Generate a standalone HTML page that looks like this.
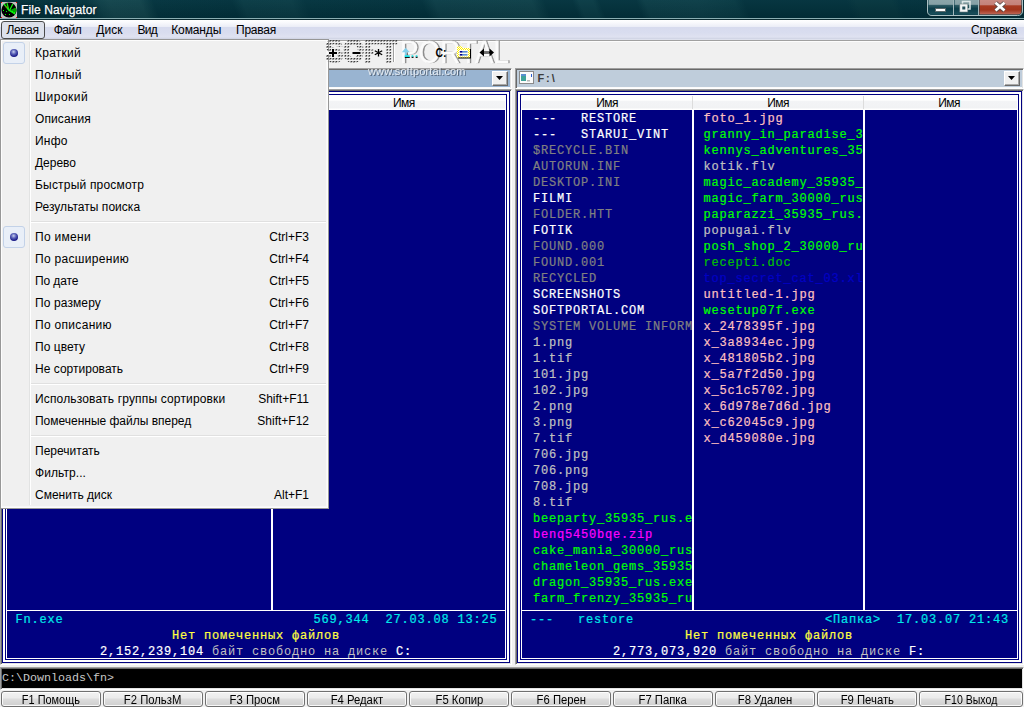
<!DOCTYPE html><html lang="ru"><head><meta charset="utf-8"><title>File Navigator</title><style>
*{box-sizing:border-box;margin:0;padding:0}
html,body{width:1024px;height:707px;overflow:hidden;background:#f0f0f0}
body{position:relative;font-family:"Liberation Sans",sans-serif;font-size:12px;color:#000}
.a{position:absolute}
.t{position:absolute;white-space:pre;line-height:16px;height:16px}
#title{left:0;top:0;width:1024px;height:18px;background:linear-gradient(68deg,#02303a 3px,#04343e 86px,#0e4049 98px,#13454d 107px,#12444c 136px,#03343f 148px,#02323d 221px,#093b45 231px,#0a3c46 276px,#03343f 289px,#02323d 397px,#0c3e48 409px,#0e4049 499px,#03333e 511px,#03333e 537px,#0a3c46 543px,#0a3c46 556px,#03333e 562px,#03333e 596px,#0b3d47 604px,#0c3e48 652px,#083a44 687px,#02323d 696px,#02323d 791px,#06363f 800px,#06363f 833px,#02323d 840px,#03313b 952px)}
#title .shade{left:0;top:0;width:1024px;height:18px;background:linear-gradient(180deg,rgba(255,255,255,.02),rgba(0,0,0,.12))}
#tl1{left:0;top:18px;width:1024px;height:1px;background:#8aaeb2}
#tl2{left:0;top:19px;width:1024px;height:1px;background:#0a2a30}
#ttext{left:21px;top:2px;color:#fff;font-size:12px;line-height:16px;letter-spacing:.12px;-webkit-text-stroke:.25px #fff;text-shadow:0 0 3px rgba(0,20,30,.9)}
#menubar{left:0;top:20px;width:1024px;height:20px;background:linear-gradient(180deg,#ffffff 0,#f7f8fc 3px,#eceef7 6.5px,#d7dbee 7.5px,#d9ddef 13px,#dfe2f1 17px,#d2d6e6 18.5px,#e4e6f0 20px)}
#mline{left:0;top:40px;width:1024px;height:1px;background:#a0a0a0}
.mi{position:absolute;top:22px;height:18px;line-height:17px;font-size:12px;white-space:pre;color:#000}
#mleft{left:1px;top:21px;width:44px;height:18px;border:1px solid #4a4a4a;border-radius:3px;background:linear-gradient(180deg,#dcdfe8,#dde2ee)}
.mono{font-family:"Liberation Mono",monospace;font-size:12px;letter-spacing:.8px;font-weight:normal;-webkit-text-stroke:0.2px currentColor}
.panel{position:absolute;top:89px;height:576px;background:#000080}
.hd{position:absolute;top:95px;height:15px;background:linear-gradient(180deg,#fff 0,#fff 5px,#f3f4f6 6.5px,#f1f2f4 13px,#fff 14px)}
.hdt{position:absolute;top:96px;font-size:12px;letter-spacing:-.55px;line-height:14px;color:#000;text-align:center;white-space:pre}
.w{position:absolute;background:#fff}
.fk{position:absolute;top:691px;height:16px;width:100px;border:1px solid #707070;border-radius:3px;background:linear-gradient(180deg,#f2f2f2 0,#ebebeb 6px,#dddddd 7px,#cfcfcf 14px);box-shadow:inset 0 0 0 1px rgba(255,255,255,.85);text-align:center;font-size:12px;line-height:16px;white-space:pre;overflow:hidden}
.fk span{display:inline-block;transform-origin:50% 50%}
#menu{left:0;top:39px;width:329px;height:470px;background:#f0f0f0;border:1px solid #979797}
#menu .in{left:0;top:0;width:327px;height:468px;border:1px solid #fdfdfd;box-shadow:inset -1px -1px 0 #f8f8f8}
.gut1{left:28px;top:2px;width:1px;height:463px;background:#e2e3e3}
.gut2{left:29px;top:2px;width:1px;height:463px;background:#fff}
.it{position:absolute;left:34px;font-size:12px;line-height:22px;height:22px;white-space:pre;color:#000}
.sc{position:absolute;right:19px;font-size:12px;line-height:22px;height:22px;white-space:pre;color:#000}
.sep{position:absolute;left:30px;width:295px;height:2px;border-top:1px solid #e0e0e0;border-bottom:1px solid #fff}
.chk{position:absolute;left:2px;width:22px;height:22px;border:1px solid #c3d2e8;border-radius:3px;background:#e9eff8}
.ball{position:absolute;left:6px;top:5.5px;width:8px;height:8px;border-radius:50%;background:radial-gradient(circle at 45% 35%,#c8d0ee 0,#5a62b8 35%,#1a1a88 70%,#141478 100%)}
</style></head><body>
<div id="title" class="a"><div class="a shade"></div></div><div id="tl1" class="a"></div><div id="tl2" class="a"></div>
<svg class="a" style="left:1px;top:2px" width="16" height="16" viewBox="0 0 16 16"><rect width="16" height="16" fill="#c0c0c0"/><circle cx="8" cy="8" r="7.6" fill="#000"/><path d="M8 8.500 L14.800 5.500 L15.600 9 L13.800 12.500 Z" fill="#00a000"/><path d="M8.500 9 L3 2 M7.500 7 L6 1.200 M8.500 8.500 L11.800 2 M8.500 8.500 L14 12" stroke="#10f010" stroke-width="1.300" fill="none"/><path d="M4.500 4.500h2v1h-2z" fill="#b04000"/><g fill="#00ff00"><rect x="2" y="8" width="1" height="1"/><rect x="5" y="9" width="1" height="1"/><rect x="4" y="12" width="1" height="1"/><rect x="8" y="12" width="1" height="1"/><rect x="11" y="9" width="1" height="1"/><rect x="13" y="10" width="1" height="1"/></g><g fill="#ff0000"><rect x="0" y="0" width="1" height="1"/><rect x="15" y="0" width="1" height="1"/><rect x="0" y="15" width="1" height="1"/><rect x="15" y="15" width="1" height="1"/></g></svg>
<div id="ttext" class="a">File Navigator</div>
<svg class="a" style="left:926px;top:0" width="98" height="18" viewBox="0 0 98 18"><defs><linearGradient id="gb" x1="0" y1="0" x2="0" y2="1"><stop offset="0" stop-color="#8aa5a9"/><stop offset=".30" stop-color="#86a1a6"/><stop offset=".36" stop-color="#2e5b64"/><stop offset=".6" stop-color="#0a3d49"/><stop offset="1" stop-color="#1a505c"/></linearGradient><linearGradient id="gr" x1="0" y1="0" x2="0" y2="1"><stop offset="0" stop-color="#c98a82"/><stop offset=".33" stop-color="#c4827a"/><stop offset=".40" stop-color="#a83a22"/><stop offset=".68" stop-color="#a2341c"/><stop offset="1" stop-color="#bf6a5a"/></linearGradient></defs><path d="M0.500 -1 V11.500 Q0.500 16.500 5.500 16.500 H92 Q97.500 16.500 97.500 11.500 V-1" fill="none" stroke="#062a32" stroke-width="1" opacity=".7"/><path d="M1.500 -1 V11 Q1.500 15.500 6 15.500 H91.500 Q96.500 15.500 96.500 11 V-1" fill="#0a3d49" stroke="#a9c0c3" stroke-width="1"/><path d="M2.500 0 H27 V14.500 H6 Q2.500 14.500 2.500 11 Z" fill="url(#gb)"/><path d="M28.500 0 H52 V14.500 H28.500 Z" fill="url(#gb)"/><path d="M53.500 0 H95.500 V11 Q95.500 14.500 91.500 14.500 H53.500 Z" fill="url(#gr)"/><path d="M27.500 0 V15 M52.500 0 V15" stroke="#c7d6d8" stroke-width="1" opacity=".8"/><rect x="9.500" y="8.500" width="10" height="3" fill="#fff" stroke="#5a6a6c" stroke-width="1"/><rect x="36.500" y="1.500" width="7.500" height="7.500" fill="none" stroke="#dfe8e8" stroke-width="1.500"/><rect x="33.800" y="4" width="8" height="8" fill="#f4f7f7" stroke="#6a7a7c" stroke-width=".6"/><rect x="36.300" y="6.500" width="3" height="3" fill="#244f5a"/><path d="M69.500 2.800 L78.500 10.500 M78.500 2.800 L69.500 10.500" stroke="#5b4a48" stroke-width="4.4" stroke-linecap="butt"/><path d="M69.500 2.800 L78.500 10.500 M78.500 2.800 L69.500 10.500" stroke="#fff" stroke-width="2.800" stroke-linecap="butt"/></svg>
<div id="menubar" class="a"></div><div id="mline" class="a"></div><div class="a" style="left:0;top:41px;width:1024px;height:1px;background:#fcfcfc"></div>
<div id="mleft" class="a"></div>
<div class="mi" style="left:6.50px;letter-spacing:-0.394px">Левая</div><div class="mi" style="left:53.75px;letter-spacing:-0.504px">Файл</div><div class="mi" style="left:96.25px;letter-spacing:0.039px">Диск</div><div class="mi" style="left:137.50px;letter-spacing:-0.740px">Вид</div><div class="mi" style="left:171.25px;letter-spacing:-0.121px">Команды</div><div class="mi" style="left:236.00px;letter-spacing:-0.232px">Правая</div><div class="mi" style="left:971.00px;letter-spacing:-0.154px">Справка</div>
<div class="a" style="left:393px;top:44px;width:1px;height:18px;background:#a0a0a0"></div><div class="a" style="left:394px;top:44px;width:1px;height:18px;background:#fff"></div>
<svg class="a" style="left:326px;top:40px;filter:grayscale(1)" width="186" height="42" viewBox="0 0 186 42" font-family='"Liberation Sans", sans-serif' font-size="30.500"><text x="75.300" y="23.400" fill="#707070" fill-opacity=".75" stroke="#707070" stroke-opacity=".5" stroke-width=".5" textLength="109" lengthAdjust="spacingAndGlyphs">PORTAL</text><text x="74" y="22.600" fill="#fbfbfb" fill-opacity="1" stroke="#fbfbfb" stroke-width=".3" textLength="109" lengthAdjust="spacingAndGlyphs">PORTAL</text></svg>
<svg class="a" style="left:326px;top:40px" width="186" height="42" viewBox="0 0 186 42" font-family='"Liberation Sans", sans-serif'><path d="M3 13 H11 M7 9 V17" stroke="#000" stroke-width="2"/><path d="M26.500 13 H34.500" stroke="#000" stroke-width="2"/><path d="M52.500 9 V16.500 M48.800 10.800 L56.200 14.800 M56.200 10.800 L48.800 14.800" stroke="#000" stroke-width="1.300"/><rect x="80.600" y="12.300" width="1" height="3.200" fill="#000" opacity=".85"/><rect x="78.800" y="16.800" width="5" height="1.100" fill="#000"/><path d="M79.700 7.700 L83.700 12.200 H80.600 V15.500 H83.500 V16.900 H78.800 V12.200 H75.800 Z" fill="#84d0ec"/><rect x="78.800" y="15.400" width="4.700" height="1.500" fill="#00e4e4"/><rect x="85.600" y="16.500" width="1.900" height="1.400" fill="#000"/><rect x="85.600" y="15.300" width="1.700" height="1.400" fill="#00e4e4"/><rect x="89.700" y="16.500" width="1.900" height="1.400" fill="#000"/><rect x="89.700" y="15.300" width="1.700" height="1.400" fill="#00e4e4"/><text x="109.500" y="17.200" font-size="12" font-weight="bold" fill="#000" textLength="11" lengthAdjust="spacingAndGlyphs">C:</text><defs><pattern id="chk" width="2" height="2" patternUnits="userSpaceOnUse"><rect width="2" height="2" fill="#fffff0"/><rect width="1" height="1" fill="#ffee00"/><rect x="1" y="1" width="1" height="1" fill="#ffee00"/></pattern></defs><path d="M132 9 H145 V18.500 H132 Z" fill="#000"/><path d="M131 6.300 H136 L137 8 H144 V17.500 H131 Z" fill="url(#chk)"/><rect x="133" y="10" width="9" height="6.500" fill="#fffdf0"/><rect x="136" y="11" width="5.500" height="1.600" fill="#5b8fd8"/><rect x="136" y="14" width="5.500" height="1.600" fill="#5b8fd8"/><rect x="133.800" y="11" width="2.400" height="1.600" fill="#000090"/><rect x="133.800" y="14" width="2.400" height="1.600" fill="#000090"/><path d="M153.500 12.500 L158 8.500 V11.500 H163.500 V8.500 L168 12.500 L163.500 16.500 V13.500 H158 V16.500 Z" fill="#000"/><rect x="158" y="11.600" width="5" height="1.800" fill="#707070"/></svg>
<div class="a" style="left:0px;top:68px;width:512px;height:21px;background:#99b4d1;border-top:1px solid #a0a0a0;border-left:1px solid #a0a0a0;border-right:1px solid #fff;border-bottom:1px solid #fff;box-shadow:inset 1px 1px 0 #696969,inset -1px 0 0 #e3e3e3,inset 0 -1px 0 #fafafa"></div>
<div class="a" style="left:492px;top:71px;width:16px;height:15px;background:#f0f0f0;border-top:1px solid #fff;border-left:1px solid #fff;border-right:1px solid #696969;border-bottom:1px solid #696969;box-shadow:inset -1px -1px 0 #a9a9a9"></div>
<svg class="a" style="left:496px;top:76px" width="8" height="5" viewBox="0 0 8 5"><path d="M0 0 H7 L3.500 4 Z" fill="#000"/></svg>
<div class="a" style="left:515px;top:68px;width:509px;height:21px;background:#bfcddb;border-top:1px solid #a0a0a0;border-left:1px solid #a0a0a0;border-right:1px solid #fff;border-bottom:1px solid #fff;box-shadow:inset 1px 1px 0 #696969,inset -1px 0 0 #e3e3e3,inset 0 -1px 0 #fafafa"></div>
<div class="a" style="left:1004px;top:71px;width:16px;height:15px;background:#f0f0f0;border-top:1px solid #fff;border-left:1px solid #fff;border-right:1px solid #696969;border-bottom:1px solid #696969;box-shadow:inset -1px -1px 0 #a9a9a9"></div>
<svg class="a" style="left:1008px;top:76px" width="8" height="5" viewBox="0 0 8 5"><path d="M0 0 H7 L3.500 4 Z" fill="#000"/></svg>
<svg class="a" style="left:519px;top:71px" width="15" height="13" viewBox="0 0 15 13"><rect x=".5" y=".5" width="14" height="12" fill="#fcfcfc" stroke="#8a8a8a"/><rect x="2" y="3" width="5" height="7" fill="#3fa39a"/><rect x="2" y="3" width="5" height="2" fill="#5a8fd0"/><rect x="8" y="9" width="3" height="1.500" fill="#b8b8b8"/><rect x="12" y="3" width="1" height="3" fill="#2a5fd0"/></svg>
<div class="a" style="left:537.5px;top:70px;font-size:11px;line-height:16px;font-weight:bold;color:#3c3c3c;white-space:pre;letter-spacing:1.9px">F:\</div>
<div class="a" style="left:23px;top:70px;font-size:11px;line-height:16px;font-weight:bold;color:#fff;white-space:pre">C:\</div>
<div class="a" style="left:368px;top:63px;width:99px;font-size:11px;letter-spacing:.12px;line-height:16px;color:#eef2f6;white-space:pre;text-shadow:1px 1px 0 rgba(60,72,90,.8);opacity:.92" id="wurl">www.softportal.com</div>
<div class="panel" style="left:0px;width:512px;border-top:1px solid #a0a0a0;border-left:1px solid #a0a0a0;border-right:1px solid #fff;border-bottom:1px solid #fff;box-shadow:inset 1px 1px 0 #696969,inset -1px -1px 0 #e3e3e3"></div>
<div class="a" style="left:3px;top:92px;width:506px;height:570px;border:2px solid #fff"></div>
<div class="a" style="left:6px;top:95px;width:500px;height:564px;border:1px solid #fff"></div>
<div class="hd" style="left:7px;width:498px"></div>
<div class="w" style="left:7px;top:610px;width:498px;height:1px"></div>
<div class="w" style="left:271px;top:110px;width:2px;height:500px"></div>
<div class="a" style="left:271px;top:96px;width:1px;height:13px;background:#dcdcdc"></div>
<div class="hdt" style="left:109px;width:60px">Имя</div>
<div class="hdt" style="left:373.8px;width:60px">Имя</div>
<div class="panel" style="left:515px;width:509px;border-top:1px solid #a0a0a0;border-left:1px solid #a0a0a0;border-right:1px solid #fff;border-bottom:1px solid #fff;box-shadow:inset 1px 1px 0 #696969,inset -1px -1px 0 #e3e3e3"></div>
<div class="a" style="left:518px;top:92px;width:503px;height:570px;border:2px solid #fff"></div>
<div class="a" style="left:521px;top:95px;width:497px;height:564px;border:1px solid #fff"></div>
<div class="hd" style="left:522px;width:495px"></div>
<div class="w" style="left:522px;top:610px;width:495px;height:1px"></div>
<div class="w" style="left:692px;top:110px;width:2px;height:500px"></div>
<div class="a" style="left:692px;top:96px;width:1px;height:13px;background:#dcdcdc"></div>
<div class="w" style="left:863px;top:110px;width:2px;height:500px"></div>
<div class="a" style="left:863px;top:96px;width:1px;height:13px;background:#dcdcdc"></div>
<div class="hdt" style="left:577px;width:60px">Имя</div>
<div class="hdt" style="left:748px;width:60px">Имя</div>
<div class="hdt" style="left:919px;width:60px">Имя</div>
<div class="a mono" style="left:522px;top:110px;width:170px;height:500px;overflow:hidden">
<div class="t" style="left:11px;top:1px;color:#ffffff">---   RESTORE</div>
<div class="t" style="left:11px;top:17px;color:#ffffff">---   STARUI_VINT</div>
<div class="t" style="left:11px;top:33px;color:#808080">$RECYCLE.BIN</div>
<div class="t" style="left:11px;top:49px;color:#808080">AUTORUN.INF</div>
<div class="t" style="left:11px;top:65px;color:#808080">DESKTOP.INI</div>
<div class="t" style="left:11px;top:81px;color:#ffffff">FILMI</div>
<div class="t" style="left:11px;top:97px;color:#808080">FOLDER.HTT</div>
<div class="t" style="left:11px;top:113px;color:#ffffff">FOTIK</div>
<div class="t" style="left:11px;top:129px;color:#808080">FOUND.000</div>
<div class="t" style="left:11px;top:145px;color:#808080">FOUND.001</div>
<div class="t" style="left:11px;top:161px;color:#808080">RECYCLED</div>
<div class="t" style="left:11px;top:177px;color:#ffffff">SCREENSHOTS</div>
<div class="t" style="left:11px;top:193px;color:#ffffff">SOFTPORTAL.COM</div>
<div class="t" style="left:11px;top:209px;color:#808080">SYSTEM VOLUME INFORMATION</div>
<div class="t" style="left:11px;top:225px;color:#c0c0c0">1.png</div>
<div class="t" style="left:11px;top:241px;color:#c0c0c0">1.tif</div>
<div class="t" style="left:11px;top:257px;color:#c0c0c0">101.jpg</div>
<div class="t" style="left:11px;top:273px;color:#c0c0c0">102.jpg</div>
<div class="t" style="left:11px;top:289px;color:#c0c0c0">2.png</div>
<div class="t" style="left:11px;top:305px;color:#c0c0c0">3.png</div>
<div class="t" style="left:11px;top:321px;color:#c0c0c0">7.tif</div>
<div class="t" style="left:11px;top:337px;color:#c0c0c0">706.jpg</div>
<div class="t" style="left:11px;top:353px;color:#c0c0c0">706.png</div>
<div class="t" style="left:11px;top:369px;color:#c0c0c0">708.jpg</div>
<div class="t" style="left:11px;top:385px;color:#c0c0c0">8.tif</div>
<div class="t" style="left:11px;top:401px;color:#00ff00">beeparty_35935_rus.exe</div>
<div class="t" style="left:11px;top:417px;color:#ff00ff">benq5450bqe.zip</div>
<div class="t" style="left:11px;top:433px;color:#00ff00">cake_mania_30000_rus.exe</div>
<div class="t" style="left:11px;top:449px;color:#00ff00">chameleon_gems_35935_rus.exe</div>
<div class="t" style="left:11px;top:465px;color:#00ff00">dragon_35935_rus.exe</div>
<div class="t" style="left:11px;top:481px;color:#00ff00">farm_frenzy_35935_rus.exe</div>
</div>
<div class="a mono" style="left:694px;top:110px;width:169px;height:500px;overflow:hidden">
<div class="t" style="left:9.5px;top:1px;color:#ffc0c0">foto_1.jpg</div>
<div class="t" style="left:9.5px;top:17px;color:#00ff00">granny_in_paradise_35935_rus.exe</div>
<div class="t" style="left:9.5px;top:33px;color:#00ff00">kennys_adventures_35935_rus.exe</div>
<div class="t" style="left:9.5px;top:49px;color:#c0c0c0">kotik.flv</div>
<div class="t" style="left:9.5px;top:65px;color:#00ff00">magic_academy_35935_rus.exe</div>
<div class="t" style="left:9.5px;top:81px;color:#00ff00">magic_farm_30000_rus.exe</div>
<div class="t" style="left:9.5px;top:97px;color:#00ff00">paparazzi_35935_rus.exe</div>
<div class="t" style="left:9.5px;top:113px;color:#c0c0c0">popugai.flv</div>
<div class="t" style="left:9.5px;top:129px;color:#00ff00">posh_shop_2_30000_rus.exe</div>
<div class="t" style="left:9.5px;top:145px;color:#00c000">recepti.doc</div>
<div class="t" style="left:9.5px;top:161px;color:#0000c4">top_secret_cat_03.xls</div>
<div class="t" style="left:9.5px;top:177px;color:#ffc0c0">untitled-1.jpg</div>
<div class="t" style="left:9.5px;top:193px;color:#00ff00">wesetup07f.exe</div>
<div class="t" style="left:9.5px;top:209px;color:#ffc0c0">x_2478395f.jpg</div>
<div class="t" style="left:9.5px;top:225px;color:#ffc0c0">x_3a8934ec.jpg</div>
<div class="t" style="left:9.5px;top:241px;color:#ffc0c0">x_481805b2.jpg</div>
<div class="t" style="left:9.5px;top:257px;color:#ffc0c0">x_5a7f2d50.jpg</div>
<div class="t" style="left:9.5px;top:273px;color:#ffc0c0">x_5c1c5702.jpg</div>
<div class="t" style="left:9.5px;top:289px;color:#ffc0c0">x_6d978e7d6d.jpg</div>
<div class="t" style="left:9.5px;top:305px;color:#ffc0c0">x_c62045c9.jpg</div>
<div class="t" style="left:9.5px;top:321px;color:#ffc0c0">x_d459080e.jpg</div>
</div>
<div class="a mono" style="left:7px;top:611px;width:498px;height:48px;overflow:hidden">
<div class="t" style="left:8.5px;top:1px;color:#00e8e8">Fn.exe</div>
<div class="t" style="left:306.5px;top:1px;color:#00e8e8">569,344  27.03.08 13:25</div>
<div class="t" style="left:165px;top:17px;color:#ffff40">Нет помеченных файлов</div>
<div class="t" style="left:93px;top:33px;color:#c0c0c0"><span style="color:#fff">2,152,239,104</span> <span style="-webkit-text-stroke:0">байт свободно на диске</span> <span style="color:#fff">C:</span></div>
</div>
<div class="a mono" style="left:522px;top:611px;width:495px;height:48px;overflow:hidden">
<div class="t" style="left:8px;top:1px;color:#00e8e8">---   restore</div>
<div class="t" style="left:303px;top:1px;color:#00e8e8">&lt;Папка&gt;  17.03.07 21:43</div>
<div class="t" style="left:163px;top:17px;color:#ffff40">Нет помеченных файлов</div>
<div class="t" style="left:91px;top:33px;color:#c0c0c0"><span style="color:#fff">2,773,073,920</span> <span style="-webkit-text-stroke:0">байт свободно на диске</span> <span style="color:#fff">F:</span></div>
</div>
<div class="a" style="left:0;top:667px;width:1024px;height:23px;background:#000;border-top:1px solid #a0a0a0;border-left:1px solid #a0a0a0;border-right:1px solid #fff;border-bottom:1px solid #fff;box-shadow:inset 1px 1px 0 #696969,inset -1px -1px 0 #e3e3e3"></div>
<div class="a" style="left:2px;top:670px;font-family:'Liberation Mono',monospace;font-size:11.67px;line-height:16px;color:#c8c8c8;white-space:pre" id="cmd">C:\Downloads\fn&gt;</div>
<div class="fk" style="left:1px"><span style="transform:scaleX(0.91)">F1 Помощь</span></div>
<div class="fk" style="left:103px"><span style="transform:scaleX(0.94)">F2 ПользМ</span></div>
<div class="fk" style="left:205px"><span style="transform:scaleX(0.94)">F3 Просм</span></div>
<div class="fk" style="left:307px"><span style="transform:scaleX(0.94)">F4 Редакт</span></div>
<div class="fk" style="left:409px"><span style="transform:scaleX(0.94)">F5 Копир</span></div>
<div class="fk" style="left:511px"><span style="transform:scaleX(0.94)">F6 Перен</span></div>
<div class="fk" style="left:613px"><span style="transform:scaleX(0.94)">F7 Папка</span></div>
<div class="fk" style="left:715px"><span style="transform:scaleX(0.94)">F8 Удален</span></div>
<div class="fk" style="left:817px"><span style="transform:scaleX(0.94)">F9 Печать</span></div>
<div class="fk" style="left:919px;width:104px"><span style="transform:scaleX(0.88)">F10 Выход</span></div>
<div id="menu" class="a"><div class="a in"></div><div class="a gut1"></div><div class="a gut2"></div>
<div class="chk" style="top:2px"><div class="ball"></div></div>
<div class="it" style="top:2px;letter-spacing:0.252px">Краткий</div>
<div class="it" style="top:24px;letter-spacing:0.500px">Полный</div>
<div class="it" style="top:46px;letter-spacing:0.512px">Широкий</div>
<div class="it" style="top:68px;letter-spacing:0.107px">Описания</div>
<div class="it" style="top:90px;letter-spacing:0.222px">Инфо</div>
<div class="it" style="top:112px;letter-spacing:-0.010px">Дерево</div>
<div class="it" style="top:134px;letter-spacing:0.193px">Быстрый просмотр</div>
<div class="it" style="top:156px;letter-spacing:0.029px">Результаты поиска</div>
<div class="sep" style="top:181px"></div>
<div class="chk" style="top:186px"><div class="ball"></div></div>
<div class="it" style="top:186px;letter-spacing:0.288px">По имени</div>
<div class="sc" style="top:186px">Ctrl+F3</div>
<div class="it" style="top:208px;letter-spacing:0.315px">По расширению</div>
<div class="sc" style="top:208px">Ctrl+F4</div>
<div class="it" style="top:230px;letter-spacing:-0.113px">По дате</div>
<div class="sc" style="top:230px">Ctrl+F5</div>
<div class="it" style="top:252px;letter-spacing:0.109px">По размеру</div>
<div class="sc" style="top:252px">Ctrl+F6</div>
<div class="it" style="top:274px;letter-spacing:0.308px">По описанию</div>
<div class="sc" style="top:274px">Ctrl+F7</div>
<div class="it" style="top:296px;letter-spacing:0.043px">По цвету</div>
<div class="sc" style="top:296px">Ctrl+F8</div>
<div class="it" style="top:318px;letter-spacing:0.018px">Не сортировать</div>
<div class="sc" style="top:318px">Ctrl+F9</div>
<div class="sep" style="top:343px"></div>
<div class="it" style="top:348px;letter-spacing:0.162px">Использовать группы сортировки</div>
<div class="sc" style="top:348px">Shift+F11</div>
<div class="it" style="top:370px;letter-spacing:-0.012px">Помеченные файлы вперед</div>
<div class="sc" style="top:370px">Shift+F12</div>
<div class="sep" style="top:395px"></div>
<div class="it" style="top:400px;letter-spacing:0.017px">Перечитать</div>
<div class="it" style="top:422px;letter-spacing:0.075px">Фильтр...</div>
<div class="it" style="top:444px;letter-spacing:-0.006px">Сменить диск</div>
<div class="sc" style="top:444px">Alt+F1</div>
</div>
<svg class="a" style="left:326px;top:40px;filter:grayscale(1)" width="186" height="42" viewBox="0 0 186 42" font-family='"Liberation Sans", sans-serif'><defs><pattern id="dots" x="0" y="0" width="3" height="3" patternUnits="userSpaceOnUse"><rect x="0" y=".7" width="1.300" height="1.100" fill="#989898"/><rect x=".8" y="0" width="1.400" height="1.300" fill="#3c3c3c"/></pattern></defs><text x="-1" y="22.400" font-size="30.500" font-weight="bold" fill="url(#dots)" stroke="url(#dots)" stroke-width="2" textLength="72" lengthAdjust="spacingAndGlyphs">SOFT</text><path d="M2 13 H12 M7 8 V18" stroke="#f0f0f0" stroke-width="3.400"/><path d="M25.500 13 H35.500" stroke="#f0f0f0" stroke-width="3.400"/><rect x="48" y="8.500" width="9" height="8.500" fill="#f0f0f0"/><path d="M3 13 H11 M7 9 V17" stroke="#000" stroke-width="2"/><path d="M26.500 13 H34.500" stroke="#000" stroke-width="2"/><path d="M52.500 9 V16.500 M48.800 10.800 L56.200 14.800 M56.200 10.800 L48.800 14.800" stroke="#000" stroke-width="1.300"/></svg>
</body></html>
